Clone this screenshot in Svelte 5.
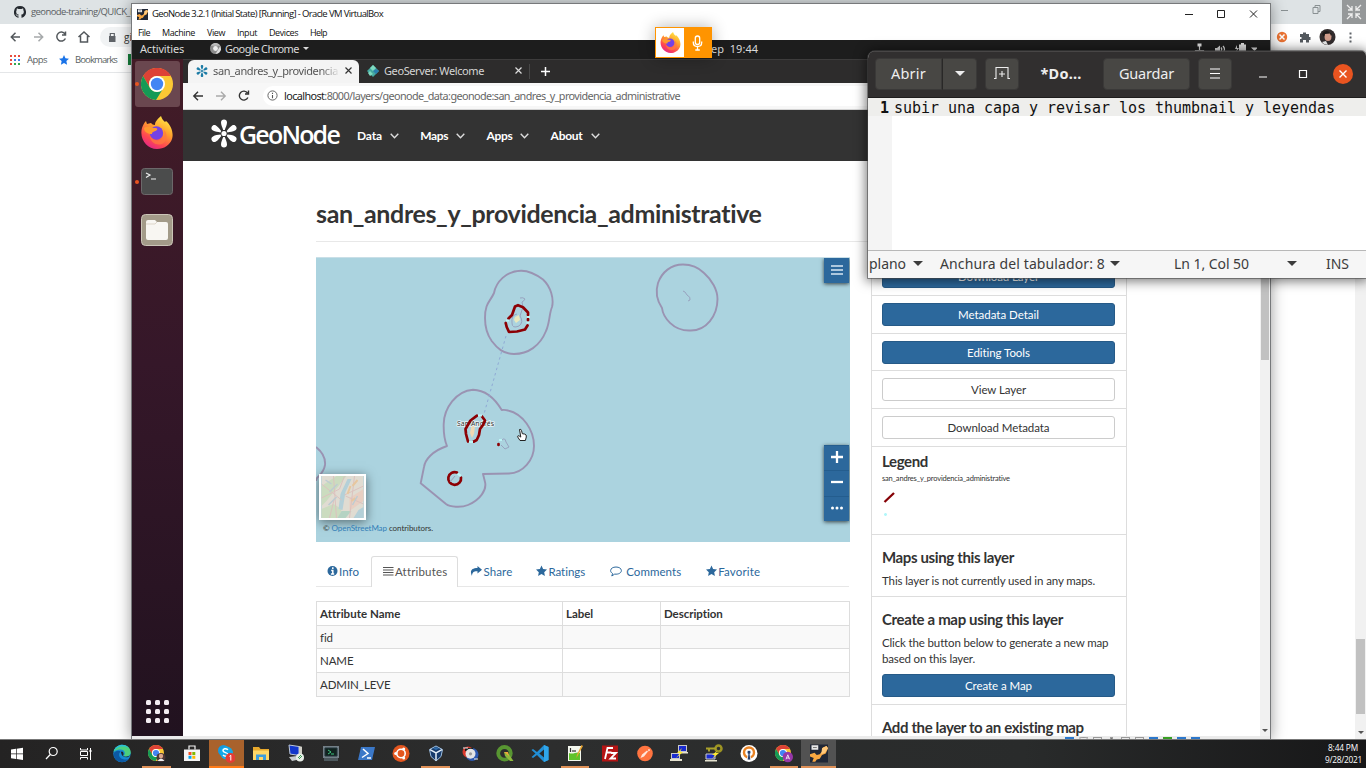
<script>
  // Spreads a line of text over the given width by adjusting its tracking.
  function fit(node, width) {
    const w = node.getBoundingClientRect().width;
    node.style.letterSpacing = (width - w) / node.textContent.length + 'px';
  }

  const menus = [['File', 12], ['Machine', 33], ['View', 18], ['Input', 20], ['Devices', 29], ['Help', 17]];
  const nav = [['Data', 25], ['Maps', 28], ['Apps', 26], ['About', 32]];
  const tabs = [
    ['info', 'Info', 20], ['list', 'Attributes', 52], ['share', 'Share', 29],
    ['star', 'Ratings', 37], ['comment', 'Comments', 55], ['star', 'Favorite', 42]
  ];
  const rows = ['fid', 'NAME', 'ADMIN_LEVE'];
  const actions = [
    ['Download Layer', 81, true], ['Metadata Detail', 81, true], ['Editing Tools', 63, true],
    ['View Layer', 55, false], ['Download Metadata', 102, false]
  ];
  const tasks = ['windows', 'search', 'view', 'edge', 'chromeUser', 'store', 'skype', 'folder', 'remote', 'term',
    'powershell', 'ubuntu', 'vbox', 'disc', 'qgis', 'vscode', 'notepad', 'filezilla', 'postman', 'putty', 'key',
    'openvpn', 'chromeA', 'vm'];
  const running = ['chromeUser', 'vbox', 'notepad', 'chromeA', 'vm'];
</script>

{#snippet chrome()}
  <circle cx="16" cy="16" r="16" fill="#fbc834" />
  <path d="M2.1 8A16 16 0 0 1 29.9 8H16a8 8 0 0 0-7.3 11.5z" fill="#dd4236" />
  <path d="M2.1 8A16 16 0 0 0 15 32l7.3-11.8A8 8 0 0 1 9 20z" fill="#159a56" />
  <circle cx="16" cy="16" r="8" fill="#fff" />
  <circle cx="16" cy="16" r="6.2" fill="#4285f4" />
{/snippet}

{#snippet firefox(id)}
  <defs>
    <linearGradient id={id} x1=".8" y1="0" x2=".25" y2="1">
      <stop offset="0" stop-color="#fff04a" /><stop offset=".4" stop-color="#ffa02c" />
      <stop offset=".75" stop-color="#ff4552" /><stop offset="1" stop-color="#e0248e" />
    </linearGradient>
  </defs>
  <path d="M1 12C2 9 3 7 5 5l1 3 4-1c1 1 2 2 4 2 0-4 3-6 6-9 1 3 2 4 4 6l1-1c5 4 8 12 6 18C29 29 23 33 16 33 6 33-2 23 1 12z" fill="url(#{id})" />
  <circle cx="15.500" cy="17" r="6.700" fill="#7542e5" />
  <path d="M3 12c4-2 7-1 9 0 3 0 5 0 4 2-2 2-5 1-5 4-4 0-8-2-8-6z" fill="#ff9a2e" />
  <path d="M9 20c2 4 8 6 12 3 3-2 3-7 1-10 5 4 5 12-1 15-6 2-12-2-12-8z" fill="#ff7a40" opacity=".75" />
{/snippet}

{#snippet burst()}
  <g fill="currentColor">
    <circle cx="14" cy="14" r="2.600" />
    {#each [0, 60, 120, 180, 240, 300] as a}
      <path transform="rotate({a} 14 14)" d="M13.200 10.400C12.400 8 11 5.500 11 3 11 1 12.200 0 14 0s3 1 3 3c0 2.500-1.400 5-2.200 7.400z" />
    {/each}
  </g>
{/snippet}

{#snippet hostIcon()}
  <rect width="24" height="24" fill="#202736" />
  <path d="M0 13l6-2 3 3 4-1 4-5V4l5-2 2 3-3 7-5 2-3 5-4 1-2 3H3l2-5-5-2z" fill="#f7a742" />
  <path d="M16 5l6-3 2 3-4 6-5 2z" fill="#ffc97c" />
  <rect x="2" y="1" width="9" height="6" fill="#e6e6e6" />
  <path d="M4 4h5" stroke="#555" />
{/snippet}

{#snippet tabIcon(k)}
  {#if k === 'info'}
    <svg width="11" height="12" viewBox="0 0 11 12"><circle cx="5.500" cy="6" r="5" fill="currentColor" /><path d="M5.800 2.300v1.600M4.200 5.400h1.600v3.200M3.900 8.900h3.300" stroke="#fff" stroke-width="1.500" fill="none" /></svg>
  {:else if k === 'list'}
    <svg width="11" height="12" viewBox="0 0 11 12"><path d="M0 2.500h10.500M0 5h10.500M0 7.500h10.500M0 10h10.500" stroke="currentColor" stroke-width="1.200" /></svg>
  {:else if k === 'share'}
    <svg width="12" height="12" viewBox="0 0 12 12"><path d="M7.500 1 12 4.700 7.500 8.500V6.300C4 6.100 2.200 7.200 2 11-.5 6 1.500 3 7.500 3z" fill="currentColor" /></svg>
  {:else if k === 'star'}
    <svg width="11" height="12" viewBox="0 0 11 12"><path d="M5.500.6 7.100 4 11 4.500 8.200 7.200l.7 3.800-3.400-1.900L2.100 11l.7-3.800L0 4.500 3.900 4z" fill="currentColor" /></svg>
  {:else}
    <svg width="12" height="12" viewBox="0 0 12 12"><path d="M6 2C3 2 .6 3.500.6 5.600c0 1.200.8 2.200 2 2.900L1.800 11l2.900-1.900c3.800.5 6.700-1.300 6.700-3.500C11.400 3.500 9 2 6 2z" fill="none" stroke="currentColor" /></svg>
  {/if}
{/snippet}

{#snippet task(k)}
  {#if k === 'windows'}
    <path d="M3 5.500 8 4.800v4.700H3zM8.700 4.700l6.300-.9v5.700H8.700zM3 10.200h5v4.700l-5-.7zM8.700 10.200H15V16l-6.300-1z" fill="#fff" />
  {:else if k === 'search'}
    <g fill="none" stroke="#fff" stroke-width="1.200"><circle cx="10.200" cy="7.500" r="4" /><path d="M7.300 10.500 3 15" /></g>
  {:else if k === 'view'}
    <g fill="none" stroke="#fff" stroke-width="1"><path d="M2.500 4v2h7V4M2.500 15.500v-2h7v2M2.500 7.500h7v4h-7zM12.500 4v12" /><path d="M11.500 7h2" stroke-width="2" /></g>
  {:else if k === 'edge'}
    <circle cx="9" cy="9.500" r="8.700" fill="#168bd2" />
    <path d="M.6 8C2-1 17-1.500 17.700 8c.2 4-4.700 5.500-7.200 4 3-3 .5-6.500-3-6.500C4 5.500 1 7 .6 8z" fill="#4bd07e" />
    <path d="M.5 8C3-1 13-.5 15.500 4 10 1 3 3 .5 8z" fill="#2bbfd5" />
    <path d="M7.800 7.500c-4 3-1 9.500 7.700 7.700-6 6.500-16 1-14.700-6C2 6.500 6 6 7.800 7.500z" fill="#0c59a4" />
    <path d="M8 8.500c0-2 3-1 2.500 2l-.5 1.500c2 1 5 .8 7-.5-2 3-8 2.500-9-3z" fill="#252525" />
  {:else if k === 'chromeUser'}
    <g transform="translate(0 1) scale(.5)">{@render chrome()}</g>
    <circle cx="13" cy="13.500" r="4.500" fill="#4b3636" /><circle cx="13" cy="12" r="2.200" fill="#dba58a" /><path d="M9.500 17q3.500-5 7 0z" fill="#eee" />
  {:else if k === 'store'}
    <path d="M1 5.500h16V17H1z" fill="#f5f5f5" /><path d="M6 5.500V2h6v3.500" fill="none" stroke="#f5f5f5" stroke-width="1.200" />
    <path d="M5.500 8h3v3h-3z" fill="#f25022" /><path d="M9.300 8h3v3h-3z" fill="#7fba00" /><path d="M5.500 11.800h3v3h-3z" fill="#00a4ef" /><path d="M9.300 11.800h3v3h-3z" fill="#ffb900" />
  {:else if k === 'skype'}
    <circle cx="6.500" cy="6.500" r="5.500" fill="#1799dd" /><circle cx="9.500" cy="9" r="6.500" fill="#14a9e8" />
    <path d="M11 5.800C9 4 5.800 4.500 6 6.800c.2 2.200 5 1.500 5 3.800-.2 2-3.500 2-5 .4" stroke="#fff" stroke-width="1.500" fill="none" />
    <circle cx="13.500" cy="14" r="5" fill="#e53c35" /><path d="M12.500 12.300l1.300-1v5.200" stroke="#fff" fill="none" />
  {:else if k === 'folder'}
    <path d="M1 3h6l1.500 2H17v11H1z" fill="#e8a92c" /><path d="M1 6.500h16V16H1z" fill="#ffd767" /><path d="M4 16v-5.500h10V16h-3v-3H7v3z" fill="#3d9ddd" />
  {:else if k === 'remote'}
    <path d="M2 1l10 1.500v9L3 10z" fill="#1236ca" stroke="#bbc6d8" /><path d="M12 2l3 .7v8L12 12z" fill="#d0d0c8" /><path d="M2 13l8-1 4 3-9 2z" fill="#c7ccd0" /><circle cx="13" cy="13.500" r="4" fill="#e8eee8" /><path d="M11 14l3-3M12 15l3-3" stroke="#3a9c52" />
  {:else if k === 'term'}
    <path d="M1 2h16v12H1z" fill="#738088" /><path d="M2 14h14v3H2z" fill="#4c585d" /><path d="M3 4h12v8H3z" fill="#10231f" stroke="#23343a" /><path d="M6 6l3 2-3 2M9 10h3" stroke="#3fc680" fill="none" />
  {:else if k === 'powershell'}
    <path d="M4 3h14l-3 13H1z" fill="#3b78c8" /><path d="M6 5l5 4.500-6 4M10 14h4" stroke="#fff" stroke-width="1.500" fill="none" />
  {:else if k === 'ubuntu'}
    <circle cx="9" cy="9.500" r="8.500" fill="#e4561f" /><circle cx="9" cy="9.500" r="4.200" fill="none" stroke="#fff" stroke-width="1.600" /><circle cx="3.700" cy="9.500" r="1.500" fill="#fff" /><circle cx="11.700" cy="4.900" r="1.500" fill="#fff" /><circle cx="11.700" cy="14.100" r="1.500" fill="#fff" />
  {:else if k === 'vbox'}
    <path d="M9 2l6.500 3.500-1.500 7L9 17l-5-4.500L2.500 5.500z" fill="#153a6b" stroke="#9fc0e2" /><path d="M3 5.700 9 9l6-3.300M9 9v7.500" stroke="#e3eef8" stroke-width="1.500" fill="none" /><path d="M6 4.500 9 3l3 1.500L9 6z" fill="#2d6aa8" />
  {:else if k === 'disc'}
    <circle cx="11" cy="10.500" r="6.500" fill="#2c58b0" /><circle cx="7" cy="8" r="5.500" fill="#d9382c" /><path d="M4 4h8v3H4z" fill="#191919" /><circle cx="9.500" cy="9.800" r="5" fill="#e4e4e4" /><circle cx="9.500" cy="9.800" r="1.600" fill="#999" /><path d="M2 4h5M13 15h4" stroke="#eee" />
  {:else if k === 'qgis'}
    <circle cx="8.500" cy="9.300" r="6.300" fill="none" stroke="#589632" stroke-width="3.800" /><path d="M8 8l3 .3 1.500 1.500L17.500 17H14l-5-5z" fill="#8eba3c" /><path d="M8 8h4l1 4z" fill="#eea83b" />
  {:else if k === 'vscode'}
    <path d="M13 1l4.500 2v13L13 18 6 11l-4 3-1.500-1 4-3.500-4-3.500L2 5l4 3z" fill="#218fd6" /><path d="M13 5.500v8L8.300 9.500z" fill="#292a2b" /><path d="M13 1l4.500 2v13L13 18z" fill="#2fa6ea" />
  {:else if k === 'notepad'}
    <path d="M2 2h13v15H2z" fill="#f3f7ee" /><path d="M3 9c4 2 8-2 11 0v7H3z" fill="#5fc32b" /><path d="M4.500 4v4M7 6v2M9 6v2" stroke="#333" stroke-width="1.200" /><path d="M17 2 11.500 12l-1 2 .3-3L15.500 1z" fill="#e8a532" />
  {:else if k === 'filezilla'}
    <path d="M1 1.500h16v16H1z" fill="#b51414" /><path d="M4 15 6.500 4H12M5.500 8.500h5M10 9h5l-5.500 5.500H15" stroke="#fff" stroke-width="1.800" fill="none" />
  {:else if k === 'postman'}
    <circle cx="9" cy="9.500" r="7.800" fill="#ff7440" /><path d="M4.500 14 6 10.500l5-4 1 1-4 5zM12 5.500l1.500-.5.5 1.500-1.500 1z" fill="#ffe6db" />
  {:else if k === 'putty'}
    <path d="M8 1h9v7H8zM1 9h9v6H1z" fill="#c8c8c8" /><path d="M9 2h7v5H9zM2 10h7v4H2z" fill="#192bd0" /><path d="M0 15h12v2H0zM8 8h10v1.500H8z" fill="#e5e2cf" /><path d="M12 4 7 9h3l-4 5 7-6h-3z" fill="#ffea31" />
  {:else if k === 'key'}
    <circle cx="13.500" cy="4.500" r="3" fill="none" stroke="#9d9423" stroke-width="2.500" /><path d="M11 3.500H1v2h2v2h2v-2h6z" fill="#aaa12b" /><path d="M1 10h9v5H1z" fill="#192bd0" stroke="#ccc" /><path d="M0 16h12v1.500H0z" fill="#e5e2cf" /><path d="M12 7 7 11h3l-3 4 7-6h-3z" fill="#ffea31" />
  {:else if k === 'openvpn'}
    <circle cx="9" cy="9.500" r="8.500" fill="#fff" /><circle cx="9" cy="8.500" r="5" fill="none" stroke="#e88324" stroke-width="2.400" /><path d="M9 6.200a2 2 0 0 0-1 3.700L7.200 16h3.600L10 9.900a2 2 0 0 0-1-3.700z" fill="#233d6b" stroke="#fff" stroke-width=".8" />
  {:else if k === 'chromeA'}
    <g transform="translate(0 1) scale(.5)">{@render chrome()}</g><circle cx="12.800" cy="13" r="5.200" fill="#9637a8" /><path d="M11 15.300l1.800-4.500 1.800 4.500M11.500 14h2.500" fill="none" stroke="#fff" stroke-width=".8" />
  {:else}
    <g transform="translate(0 .5) scale(.75)">{@render hostIcon()}</g>
  {/if}
{/snippet}

<div class="desktop">
  <!-- Host browser behind the virtual machine -->
  <div class="host">
    <div class="host-tabs">
      <svg width="12" height="12" viewBox="0 0 16 16"><path fill="#24292f" d="M8 0a8 8 0 0 0-2.530 15.590c.4.070.55-.17.55-.38v-1.500c-2.230.48-2.700-.95-2.700-.95-.36-.92-.89-1.170-.89-1.170-.73-.5.050-.49.050-.49.800.06 1.230.83 1.230.83.710 1.220 1.870.87 2.330.66.070-.52.280-.87.500-1.070-1.770-.2-3.640-.89-3.640-3.950 0-.87.310-1.590.82-2.150-.08-.2-.36-1.020.08-2.120 0 0 .67-.21 2.200.82a7.600 7.600 0 0 1 4 0c1.530-1.040 2.200-.82 2.200-.82.440 1.100.160 1.920.080 2.120.510.560.820 1.270.820 2.150 0 3.070-1.870 3.750-3.650 3.950.290.250.540.730.540 1.480v2.200c0 .21.150.46.550.38A8 8 0 0 0 8 0z" /></svg>
      <span class="host-title"><span use:fit={101}>geonode-training/QUICK_I</span></span>
      <div class="grow"></div>
      <svg class="host-ctl" width="90" height="24" viewBox="0 0 90 24" fill="none" stroke="#899092"><path d="M5 10.500h7M37 7.500h5v6h-5zM39 7.500v-2h5v6h-2" /></svg>
    </div>
    <div class="host-bar">
      <svg width="100" height="26" viewBox="0 0 100 26" fill="none" stroke="#53585c" stroke-width="1.500"><path d="M20 13H11.500M15.500 8.800 11.300 13l4.200 4.200" /><path d="M34 13h8.500M38.500 8.800 42.700 13l-4.200 4.200" stroke="#a6a9ab" /><path d="M65 10a4.500 4.500 0 1 0 .4 4.500M65.500 7.500V11H62" /><path d="M78.500 13 84 8l5.500 5M80.500 12v6h7v-6" /></svg>
      <div class="host-url"><svg width="8" height="10" viewBox="0 0 8 10"><path d="M1 4h6.500v6H1z" fill="#5f6368" /><path d="M2.300 4V1.500h4V4" fill="none" stroke="#5f6368" stroke-width="1.200" /></svg><span use:fit={8}>gi</span></div>
      <div class="grow"></div>
      <svg width="90" height="26" viewBox="0 0 90 26"><circle cx="6" cy="13" r="5.200" fill="#ec7434" /><path d="M3.500 10.500l5 5M8.500 10.500l-5 5" stroke="#fff" stroke-width="1.500" /><path d="M24 10h3V8.500h3V10h3v3h1.500v3H33v2.500h-3V16h-3v2.500h-3V15h1.500v-2H24z" fill="#54595e" /><circle cx="51.500" cy="13" r="8" fill="#322c2d" /><ellipse cx="52" cy="12.500" rx="3.500" ry="4.500" fill="#cf9b8a" /><path d="M46 10q4-6 10 0l-1 2-1-2.500-5 .5-1 3z" fill="#1b1818" /><path d="M46 18l4-1 2 4-4-1z" fill="#eee" /><path d="M74.500 8.500v2M74.500 12.500v2M74.500 16.500v2" stroke="#5f6368" stroke-width="2" /></svg>
    </div>
    <div class="host-marks">
      <svg width="10" height="10" viewBox="0 0 10 10"><path d="M0 1h2" stroke="#e94b3c" stroke-width="2" /><path d="M4 1h2M8 1h2M0 5h2M0 9h2" stroke="#e94b3c" stroke-width="2" /><path d="M4 5h2M8 5h2" stroke="#3d7de9" stroke-width="2" /><path d="M4 9h2M8 9h2" stroke="#32a852" stroke-width="2" /></svg>
      <span class="host-mark apps" use:fit={20}>Apps</span>
      <svg width="10" height="10" viewBox="0 0 11 11"><path d="M5.500 0 7.100 3.600 11 4 8.100 6.700l.8 4.100-3.400-2.100-3.400 2.100.8-4.100L0 4l3.900-.4z" fill="#1a73e8" /></svg>
      <span class="host-mark" use:fit={42}>Bookmarks</span>
      <i class="green"></i>
    </div>
    <div class="host-page"><div class="host-scroll"><div class="host-thumb"></div><b class="caret"></b></div></div>
  </div>
  <svg class="shrink" viewBox="0 0 24 24" width="24" height="24"><path d="M0 0h24v24H0z" fill="#959899" /><path d="M5 5l5 5V6M10 10H6M19 5l-5 5V6M14 10h4M5 19l5-5v4M10 14H6M19 19l-5-5v4M14 14h4" stroke="#eee" stroke-width="1.300" fill="none" /></svg>

  <!-- Virtual machine window -->
  <section class="vm">
    <header class="vm-title">
      <svg width="11" height="11" viewBox="0 0 24 24">{@render hostIcon()}</svg>
      <span class="vm-name" use:fit={231}>GeoNode 3.2.1 (Initial State) [Running] - Oracle VM VirtualBox</span>
      <div class="grow"></div>
      <svg width="76" height="20" viewBox="0 0 76 20" fill="none" stroke="#222"><path d="M1 10.500h8M33.500 6.500h7v7h-7zM66 6.500l7 7M73 6.500l-7 7" /></svg>
    </header>
    <div class="vm-menu">{#each menus as [m, w]}<span use:fit={w}>{m}</span>{/each}</div>

    <div class="topbar">
      <span class="act" use:fit={44}>Activities</span>
      <svg class="app-icon" width="11" height="11" viewBox="0 0 32 32"><circle cx="16" cy="16" r="16" fill="#8b8b8b" /><path d="M2 8A16 16 0 0 1 30 8H16z" fill="#bbb" /><circle cx="16" cy="16" r="7" fill="#eee" /><path d="M16 32 30 9l2 10q-4 12-16 13z" fill="#ddd" /></svg>
      <span class="app" use:fit={74}>Google Chrome</span><b class="caret"></b>
      <div class="grow"></div>
      <span class="clock" use:fit={53}>Sep&nbsp; 19:44</span>
      <svg class="tray" width="64" height="14" viewBox="0 0 64 14"><g fill="none" stroke="#ddd" stroke-width="1.200"><path d="M6.500 3v5M2.500 11V8.500h8V11" /><path d="M28 5.500q1.500 1.500 0 4M30 4q3 3 0 7" /></g><path d="M4.500 1.500h4v3h-4zM1 10h3v2H1zM9 10h3v2H9zM22 6h2l3-2.500V11l-3-2h-2zM46 2.500h2V1h3v1.500h2v10h-7zM44 3l-2 4h2l-1 3 3-4h-2zM58 5.500h7L61.500 9z" fill="#ddd" /></svg>
    </div>

    <div class="guest">
      <aside class="dock">
        <div class="dock-item on"><i></i><svg width="32" height="32" viewBox="0 0 32 32">{@render chrome()}</svg></div>
        <div class="dock-item"><svg width="32" height="33" viewBox="0 0 32 33">{@render firefox('foxDock')}</svg></div>
        <div class="dock-item"><i></i><svg width="32" height="27" viewBox="0 0 32 27"><rect x=".5" y=".5" width="31" height="26" rx="3" fill="#4b4c4c" stroke="#6c686a" /><path d="M5 5l4 2-4 2.500M10 11h5" stroke="#eee" stroke-width="1.200" fill="none" /></svg></div>
        <div class="dock-item"><svg width="32" height="32" viewBox="0 0 32 32"><rect x=".5" y=".5" width="31" height="31" rx="4" fill="#a39b89" stroke="#cbc5b8" /><path d="M5 8q0-2 2-2h7l2 2h9q2 0 2 2v14q0 2-2 2H7q-2 0-2-2z" fill="#f8f6f2" /><path d="M5 10h9l2-2" stroke="#ddd5c9" fill="none" /></svg></div>
        <div class="grow"></div>
        <div class="dots">{#each Array(9) as _}<i></i>{/each}</div>
      </aside>

      <div class="browser">
        <div class="strip">
          <div class="tab active"><svg width="12" height="12" viewBox="0 0 28 28" color="#1c7ba5">{@render burst()}</svg><span class="tab-name"><span use:fit={125}>san_andres_y_providencia</span></span><svg class="x" width="7" height="7" viewBox="0 0 7 7"><path d="M.5.5l6 6M6.500.5l-6 6" stroke="#333" stroke-width="1.200" /></svg></div>
          <div class="tab second"><svg width="12" height="12" viewBox="0 0 12 12"><path d="M6 0l6 6-6 6-6-6z" fill="#45a9a0" /><path d="M6 0l3 3-3 3-3-3zM3 6l3 3-3 2-2-3z" fill="#7edac0" /><path d="M6 6l3-2 3 2-3 3z" fill="#2b7faf" /></svg><span use:fit={100}>GeoServer: Welcome</span><svg class="x" width="7" height="7" viewBox="0 0 7 7"><path d="M.5.5l6 6M6.500.5l-6 6" stroke="#ddd" stroke-width="1.200" /></svg></div>
          <svg class="plus" width="9" height="9" viewBox="0 0 9 9"><path d="M4.500 0v9M0 4.500h9" stroke="#fff" stroke-width="1.500" /></svg>
        </div>
        <div class="tools">
          <svg width="76" height="26" viewBox="0 0 76 26" fill="none" stroke="#333" stroke-width="1.400"><path d="M20 13h-9M15 8.800 10.800 13l4.200 4.200" /><path d="M33 13h9M38 8.800l4.200 4.200-4.200 4.200" stroke="#aaa" /><path d="M64.500 10a4.500 4.500 0 1 0 .4 4.500M65.500 7.500V11H62" /></svg>
          <div class="url"><svg width="11" height="11" viewBox="0 0 11 11"><circle cx="5.500" cy="5.500" r="4.600" fill="none" stroke="#666" /><path d="M5.500 5v3.300M5.500 2.700v1.200" stroke="#555" stroke-width="1.100" /></svg><span use:fit={396}><b>localhost</b>:8000/layers/geonode_data:geonode:san_andres_y_providencia_administrative</span></div>
        </div>
        <nav>
          <svg class="logo" width="28" height="29" viewBox="0 0 28 28" color="#fff">{@render burst()}</svg>
          <span class="brand" use:fit={100}>GeoNode</span>
          {#each nav as [n, w]}<span class="nav-item"><span use:fit={w}>{n}</span><svg width="9" height="6" viewBox="0 0 9 6"><path d="M.7.8l3.800 4 3.800-4" fill="none" stroke="#ddd" stroke-width="1.400" /></svg></span>{/each}
        </nav>

        <div class="view">
          <main>
            <h2><span use:fit={446}>san_andres_y_providencia_administrative</span></h2>
            <div class="cols">
              <div class="left">
                <div class="map">
                  <svg width="534" height="285" viewBox="316 257 534 285">
                    <g fill="none" stroke="#9a93b2" stroke-width="1.900" stroke-linejoin="round">
                      <path d="M521 270.700C530 270.500 537 275 543 279.500C551 287 554 299 552 307C549 314 550 322 546 331C540 346 528 354 514 354C503 354 497 348 491.700 341C486 333 485 326 485 318C485 303 490 302 494 293C496 282 506 271 521 270.700Z" />
                      <path d="M501.700 410C494 397 485 390 473 389.700C456 391 444 408 443.700 424C443.500 432 444 439 447 446C432 451 425 460 424 467L420.700 483.300L446 504C450 507 461 508 468 505C480 500 487 490 485 482L483 474L509 473.500C523 473 534 460 534 446C534 430 523 414 508 410.500Q505 409.500 501.700 410Z" />
                      <path d="M683 264.500C693 264.500 699 268 704 273C712 280 717.500 290 717.500 299C717.500 316 706 331 690 330.500C673 331 663 317 662 308C656 299 655.500 291 658 283C662 272 671 264.500 683 264.500Z" />
                      <path d="M316 447Q326 455 325 465Q324 471 319 476Q316 478 316 481" />
                    </g>
                    <path d="M506 336 484 414" stroke="#8fa9d5" stroke-dasharray="2.500 3" fill="none" />
                    <g fill="none" stroke="#98a3bf"><path d="M520 298q3-1 5 1-1 2-3 3l1 5-3 9q4 6-1 10-7 3-7-3-1-8 5-9M683 291q2 0 4 4 4 2 3 5l-2 1M502 440q3-3 4 2l3 5-4 2-4-4" /></g>
                    <path d="M515 317l4-2 1 5-4 3-2-3z" fill="#e9e9be" />
                    <path d="M472 423l3 3-1 8-2 4-2-5z" fill="#f0d8b4" />
                    <text x="457" y="425.500" textLength="37" class="place">San Andrés</text>
                    <g fill="none" stroke="#8c0004" stroke-width="2.700" stroke-linejoin="round" stroke-linecap="round">
                      <path d="M508.500 318.500 512 315 515 306.500 518 305.200 523 307.200 528 312.500V315M528 319v1.300M527.500 325.500 525 329.500 517 331.500 509 332 506.700 327 505.700 323" />
                      <path d="M477 415.700 470.500 420.500 465.500 429 466 434 468 441.500M482 416.500 485 420.500 483 425 480 429 479 435 476.700 440 473.500 441.700M498.500 444v1" />
                      <path d="M457 472.500A6.400 6.400 0 1 0 461 477.500" />
                    </g>
                    <path d="M506 320.500h3M527 317h3M526.500 322.500h3M478 415.500h4M469 442h4M499 440h3M457.500 473.500l3.500 2.500" stroke="#bcf5f5" stroke-width="2.200" />
                    <path d="M450 482l5-6" stroke="#9aa0ba" />
                    <path d="M519.500 429.500q1.500-.8 2 1l.8 3.200 2.500.4q2 .6 1.500 2.900l-.9 3.500H520l-2.500-3.800q0-1.800 2.300-.4l1 .8z" fill="#fff" stroke="#222" />
                  </svg>
                  <div class="map-menu"><svg width="14" height="12" viewBox="0 0 14 12"><path d="M1 2h12M1 6h12M1 10h12" stroke="#d8e6f2" stroke-width="1.500" /></svg></div>
                  <div class="zoom">
                    <span><svg width="12" height="12" viewBox="0 0 12 12"><path d="M6 0v12M0 6h12" stroke="#fff" stroke-width="2.300" /></svg></span>
                    <span><svg width="12" height="12" viewBox="0 0 12 12"><path d="M0 6h12" stroke="#fff" stroke-width="2.300" /></svg></span>
                    <span><svg width="12" height="12" viewBox="0 0 12 12" fill="#fff"><circle cx="1.500" cy="6" r="1.500" /><circle cx="6" cy="6" r="1.500" /><circle cx="10.500" cy="6" r="1.500" /></svg></span>
                  </div>
                  <div class="base"><svg width="43" height="42" viewBox="0 0 42 42"><path d="M0 0h42v42H0z" fill="#e0dcd2" /><path d="M0 10 15 0h10L5 25l-5 5zM0 33l12-5 8 5-2 9H0z" fill="#cbdcbf" /><path d="M26 3l4 0-6 13-3 18-4-1 2-15zM32 42l5-8 5-3v11z" fill="#b4d0d8" /><path d="M20 35h10l-6 7h-8z" fill="#b5d3c3" /><path d="M28 22l14-9v12l-14 10z" fill="#e8cfc2" /><path d="M0 22l18-9 5-13M0 8l20 16M12 0l3 42M28 42l5-42M24 20l18 8M42 10 23 19M8 42l5-20" stroke="#dcc2be" fill="none" /><path d="M26 18l3-8M36 4l-5 6M30 25l4-3" stroke="#e7c79f" stroke-width="2" /><path d="M4 4l6 4M16 8l-8 8M7 29l8-8M31 29l5-9" stroke="#bdccd2" stroke-width="1.500" /></svg></div>
                  <div class="credit"><span use:fit={110}>© <em>OpenStreetMap</em> contributors.</span></div>
                </div>
                <div class="tabs">{#each tabs as [k, t, w], i}<span class:current={i === 1} class:wide={k === 'comment'}>{@render tabIcon(k)}<span use:fit={w}>{t}</span></span>{/each}</div>
                <table>
                  <thead><tr><th><span use:fit={80}>Attribute Name</span></th><th class="lab"><span use:fit={27}>Label</span></th><th class="desc"><span use:fit={59}>Description</span></th></tr></thead>
                  <tbody>{#each rows as r}<tr><td>{r}</td><td></td><td></td></tr>{/each}</tbody>
                </table>
              </div>
              <div class="side">
                {#each actions as [t, w, solid]}<div class="row"><button class:solid><span use:fit={w}>{t}</span></button></div>{/each}
                <div class="legend">
                  <h4><span use:fit={46}>Legend</span></h4>
                  <p class="tiny"><span use:fit={128}>san_andres_y_providencia_administrative</span></p>
                  <svg width="16" height="30" viewBox="0 0 16 30"><path d="M2.500 13 12 4" stroke="#850005" stroke-width="2.300" /><path d="M2 25.500h3M3.500 24v3" stroke="#b2f7fa" stroke-width="1.600" /></svg>
                </div>
                <div class="uses"><h4><span use:fit={132}>Maps using this layer</span></h4><p><span use:fit={213}>This layer is not currently used in any maps.</span></p></div>
                <div class="create"><h4><span use:fit={181}>Create a map using this layer</span></h4><p><span use:fit={226}>Click the button below to generate a new map</span><br /><span use:fit={93}>based on this layer.</span></p><button class="solid"><span use:fit={67}>Create a Map</span></button></div>
                <div class="add"><h4><span use:fit={202}>Add the layer to an existing map</span></h4></div>
              </div>
            </div>
          </main>
          <div class="scroll"><div></div><b class="caret"></b></div>
        </div>
      </div>
    </div>
    <div class="vm-status"><i class="blue"></i><i class="disk"></i><i></i><i class="peak"></i><i></i><i></i><i class="blue"></i><i class="lime"></i><i class="blue"></i><i class="blue"></i></div>
  </section>

  <!-- Sharing indicator -->
  <div class="share"><span><svg width="21" height="21" viewBox="0 0 32 33">{@render firefox('foxShare')}</svg></span><svg width="27" height="29" viewBox="0 0 27 29" fill="none" stroke="#fff" stroke-width="1.300"><rect x="11.300" y="8" width="4.400" height="8.500" rx="2.200" /><path d="M9.300 13.500v1q0 4 4.200 4t4.200-4v-1M13.500 18.500v3.500M11.300 22h4.500" /></svg></div>

  <!-- Text editor -->
  <section class="editor">
    <header>
      <div class="pair"><span class="gbtn open"><span use:fit={35}>Abrir</span></span><span class="gbtn drop"><b class="caret"></b></span></div>
      <span class="gbtn new"><svg width="16" height="14" viewBox="0 0 16 14" fill="none" stroke="#eee" stroke-width="1.100"><path d="M0 12.500h2v-11h12v11h2M8 5v6M5 8h6" /></svg></span>
      <strong><span use:fit={41}>*Do...</span></strong>
      <span class="gbtn save"><span use:fit={55}>Guardar</span></span>
      <span class="gbtn burger"><svg width="10" height="11" viewBox="0 0 10 11"><path d="M0 1h10M0 5.500h10M0 10h10" stroke="#fff" stroke-width="1.100" /></svg></span>
      <svg class="wm" width="96" height="20" viewBox="0 0 96 20"><path d="M2 13h8M42.500 6.500h7v7h-7z" fill="none" stroke="#fff" stroke-width="1.200" /><circle cx="86" cy="10" r="10" fill="#e95420" /><path d="M82.500 6.500l7 7M89.500 6.500l-7 7" stroke="#fff" stroke-width="1.400" /></svg>
    </header>
    <div class="text"><div class="gutter"></div><div class="line"><b>1</b><span use:fit={441}>subir una capa y revisar los thumbnail y leyendas</span></div></div>
    <footer><span use:fit={37}>plano</span><b class="caret"></b><span class="tabw" use:fit={165}>Anchura del tabulador: 8</span><b class="caret"></b><span class="ln" use:fit={75}>Ln 1, Col 50</span><b class="caret far"></b><span class="ins" use:fit={23}>INS</span></footer>
  </section>

  <div class="taskbar">
    <div class="tasks">{#each tasks as t}<span class:run={running.includes(t)} class:alert={t === 'skype'} class:focus={t === 'vm'}><svg width="18" height="19" viewBox="0 0 18 19">{@render task(t)}</svg></span>{/each}</div>
    <div class="time"><span use:fit={30}>8:44 PM</span><span use:fit={37}>9/28/2021</span></div>
  </div>
</div>

<style>
  :global(body) { margin: 0; overflow: hidden; }
  * { box-sizing: border-box; }
  svg { display: block; flex: none; }
  span { white-space: nowrap; }
  .desktop { position: relative; width: 1366px; height: 768px; overflow: hidden; background: #fff; font-family: "Noto Sans", sans-serif; }
  .grow { flex: 1; }
  .caret { display: block; width: 0; height: 0; border: 4px solid transparent; border-top: 4px solid currentColor; border-bottom: 0; }

  .host { height: 740px; display: flex; flex-direction: column; font-family: "Open Sans", sans-serif; color: #5a5f63; }
  .host-tabs { height: 24px; background: #dee3e5; display: flex; align-items: center; padding-left: 14px; }
  .host-title { font-size: 9.500px; margin-left: 5px; width: 101px; padding-bottom: 2px; }
  .host-bar { height: 26px; display: flex; align-items: center; }
  .host-url { background: #f1f3f4; height: 20px; width: 60px; border-radius: 10px 0 0 10px; display: flex; align-items: center; gap: 8px; padding-left: 8px; font-size: 10px; color: #333; }
  .host-marks { height: 23px; border-bottom: 1px solid #e4e6e8; display: flex; align-items: center; padding: 0 0 3px 10px; font-size: 9.500px; }
  .host-mark { margin-left: 6px; }
  .apps { margin-right: 12px; margin-left: 7px; }
  .green { width: 6px; height: 11px; background: #16803b; margin-left: 11px; }
  .host-page { flex: 1; display: flex; justify-content: flex-end; }
  .host-scroll { width: 11px; background: #f1f1f1; display: flex; flex-direction: column; justify-content: flex-end; align-items: center; color: #555; padding-bottom: 6px; }
  .host-thumb { width: 9px; height: 75px; background: #c1c1c1; margin-bottom: 17px; }
  .shrink { position: absolute; left: 1342px; top: 0; }

  .vm { position: absolute; left: 131px; top: 3px; width: 1140px; height: 737px; border: 1px solid #77797b; border-bottom: 0; background: #fff; box-shadow: 0 0 14px rgba(0,0,0,.4); display: flex; flex-direction: column; }
  .vm-title { height: 20px; display: flex; align-items: center; gap: 4px; padding: 0 10px 0 5px; font: 9.500px "Open Sans", sans-serif; color: #111; }
  .vm-name { padding-bottom: 1px; }
  .vm-menu { height: 16px; display: flex; gap: 12px; padding: 0 0 0 6px; font: 9px/17px "Open Sans", sans-serif; color: #111; }
  .topbar { height: 19px; background: #1d1d1d; color: #dadada; display: flex; align-items: center; font-size: 11px; padding: 0 13px 2px 8px; }
  .app-icon { margin-left: 26px; }
  .app { margin: 0 4px; }
  .topbar .caret { border-width: 3.500px; border-bottom: 0; }
  .clock { margin-right: 435px; }
  .guest { flex: 1; display: flex; min-height: 0; }
  .dock { width: 51px; background: linear-gradient(#431c27, #351729 45%, #21121f); display: flex; flex-direction: column; align-items: center; padding: 2px 1px 13px 0; gap: 3.300px; }
  .dock-item { width: 45px; height: 45.500px; border-radius: 3px; display: flex; align-items: center; justify-content: center; position: relative; }
  .dock-item.on { background: #6a474f; }
  .dock-item i { position: absolute; left: 0; top: 21px; width: 4px; height: 4px; border-radius: 50%; background: #e95420; }
  .dots { display: grid; grid-template-columns: repeat(3, 5px); gap: 4px; }
  .dots i { height: 5px; border-radius: 1.500px; background: #f4eef2; }

  .browser { flex: 1; display: flex; flex-direction: column; min-width: 0; }
  .strip { height: 24px; background: #2d2c2c; border-top: 1px solid #3d3c3c; display: flex; align-items: center; padding-left: 5px; font-size: 11px; color: #d5d5d5; }
  .tab { display: flex; align-items: center; height: 24px; padding: 0 7px 2px 8px; gap: 5px; line-height: 20px; }
  .tab.active { width: 171px; background: #f4f4f4; color: #555; border-radius: 6px 6px 0 0; }
  .tab-name { width: 127px; -webkit-mask-image: linear-gradient(90deg, #000 85%, transparent); mask-image: linear-gradient(90deg, #000 85%, transparent); }
  .x { margin-left: auto; }
  .plus { margin-left: 11px; }
  .second { border-right: 1px solid #484848; width: 171px; height: 15px; }
  .tools { height: 27px; background: #f7f7f7; display: flex; align-items: center; border-bottom: 1px solid #d4d4d4; padding-bottom: 1px; }
  .url { flex: 1; margin-left: 4px; height: 20px; border-radius: 10px; background: #fff; display: flex; align-items: center; gap: 6px; padding-left: 4px; font-size: 10.800px; color: #666; }
  .url b { font-weight: 400; color: #222; }
  nav { height: 51px; background: #333; display: flex; align-items: center; padding-left: 27px; color: #fff; font: 700 12px Lato, sans-serif; }
  .brand { font: 600 25px/30px "Open Sans", sans-serif; margin: -4px 18px 0 1px; }
  .logo { margin-top: -4px; }
  .nav-item { display: flex; align-items: center; gap: 8px; margin-right: 21.200px; }

  .view { flex: 1; display: flex; min-height: 0; overflow: hidden; font-family: Lato, sans-serif; font-size: 11.500px; color: #333; }
  main { flex: 1; padding: 36px 0 0 133px; }
  h2 { margin: 0; width: 811px; height: 45px; border-bottom: 1px solid #e8e8e8; font-size: 25px; line-height: 33px; font-weight: 700; }
  h2 span { display: inline-block; }
  .cols { display: flex; gap: 22px; padding-top: 15px; }
  .left { width: 533px; }
  .map { position: relative; height: 285px; width: 533.500px; background: #abd3df; border-top: 1px solid #c9dfe7; overflow: hidden; }
  .map > svg { margin-top: -1px; }
  .place { font: 7px "Noto Sans", sans-serif; fill: #333; stroke: #e9f4f7; stroke-width: 1.500px; paint-order: stroke; }
  .map-menu, .zoom { position: absolute; left: 508px; width: 25px; background: #2c689c; box-shadow: 0 1px 4px rgba(0,0,0,.7); color: #fff; }
  .map-menu { top: 0; height: 25px; display: grid; place-items: center; padding-bottom: 1px; }
  .zoom { top: 187px; height: 76px; display: grid; }
  .zoom span { display: grid; place-items: center; border-top: 1px solid #245d8e; padding-bottom: 2px; }
  .base { position: absolute; left: 3px; top: 216px; border: 2px solid #fff; box-shadow: 0 2px 10px rgba(0,0,0,.5); }
  .credit { position: absolute; left: 7px; top: 264px; font-size: 8px; line-height: 12px; }
  .credit em { font-style: normal; color: #327eb7; }
  .tabs { display: flex; height: 31px; margin-top: 14px; border-bottom: 1px solid #e7e7e7; color: #2c689c; }
  .tabs > span { display: flex; align-items: center; gap: 1px; padding: 0 11px 2px; height: 31px; border: 1px solid transparent; border-bottom: 0; }
  .tabs > span:first-child { padding-left: 10px; }
  .tabs > .current { color: #555; background: #fff; border-color: #ddd; border-radius: 3px 3px 0 0; padding-right: 10px; }
  .tabs > .wide { gap: 4px; padding-left: 12px; padding-right: 12px; }
  table { width: 534px; margin-top: 14px; border-collapse: collapse; table-layout: fixed; }
  th, td { border: 1px solid #ddd; text-align: left; padding: 0 3px; height: 23.700px; line-height: 15px; }
  td { letter-spacing: -.1px; }
  .lab { width: 98px; } .desc { width: 189px; }
  tbody tr:nth-child(odd) { background: #f9f9f9; }

  .side { width: 256px; border: 1px solid #ddd; border-bottom: 0; height: 540px; font-size: 11.500px; }
  .side > div { border-bottom: 1px solid #ddd; padding: 0 10px; }
  .side > .row { height: 37.800px; padding-top: 7px; }
  .side > .legend { height: 88px; padding-top: 5px; }
  .side > .uses { height: 62px; padding-top: 13px; }
  .side > .create { height: 108px; padding-top: 13px; }
  .side > .add { padding-top: 13px; }
  button { display: block; width: 233px; height: 23px; border: 1px solid #ccc; border-radius: 3px; background: #fff; color: #333; font: 11.500px Lato, sans-serif; padding: 0; }
  button.solid { background: #2c689c; border-color: #265a87; color: #fff; }
  h4 { margin: 0; font-size: 15px; line-height: 19px; }
  p { margin: 6px 0 0; line-height: 16px; }
  p.tiny { margin: 3px 0 6px; font-size: 7.500px; line-height: 10px; }
  .tiny + svg { margin-top: -1px; }
  .create button { margin-top: 7px; }
  .scroll { width: 10px; background: #f1f1f1; display: flex; flex-direction: column; justify-content: space-between; align-items: center; color: #555; padding-bottom: 4px; }
  .scroll div { width: 8px; height: 199px; background: #c1c1c1; }
  .scroll .caret, .host-scroll .caret { border-width: 3px; border-bottom: 0; }
  .vm-status { height: 4px; background: #ebebeb; border-bottom: 1px solid #888; display: flex; justify-content: flex-end; gap: 5px; padding: 1px 70px 0 0; }
  .vm-status i { width: 9px; height: 2px; border: 1px solid #999; border-bottom: 0; }
  .vm-status .blue { background: #2c78cc; border: 0; } .vm-status .lime { background: #38a022; border: 0; }
  .vm-status .peak { width: 3px; background: #777; margin: 0 3px; } .vm-status .disk { border-radius: 50%; }

  .share { position: absolute; left: 655px; top: 27px; width: 57px; height: 31px; background: #ff9400; border: 1px solid #ff9400; display: flex; box-shadow: 0 0 16px rgba(0,0,0,.3); }
  .share span { width: 29px; background: #fff; display: grid; place-items: center; }

  .editor { position: absolute; left: 868px; top: 51px; width: 498px; height: 227px; border-radius: 7px 5px 0 0; background: #fff; box-shadow: 0 1px 12px 2px rgba(0,0,0,.55); display: flex; flex-direction: column; overflow: hidden; outline: 1px solid rgba(70,70,70,.55); }
  .editor header { height: 47px; background: #312f2f; border-top: 1px solid #484646; border-bottom: 1px solid #1e1d1d; display: flex; align-items: center; padding: 0 0 1px 7px; color: #eee; font-size: 14.500px; line-height: 18px; }
  .gbtn { height: 32px; background: #484744; border: 1px solid #3a3938; border-radius: 4px; display: flex; align-items: center; justify-content: center; padding-bottom: 2px; }
  .pair { display: flex; }
  .open { width: 67px; border-radius: 4px 0 0 4px; } .drop { width: 35px; border-radius: 0 4px 4px 0; border-left-color: #292827; }
  .caret { border-width: 5px; border-bottom: 0; }
  .new { width: 34px; margin-left: 8px; } .save { width: 87px; } .burger { width: 34px; margin-left: 8px; }
  header strong { width: 84px; text-align: center; padding-bottom: 2px; }
  .wm { margin-left: 25px; }
  .text { flex: 1; position: relative; display: flex; }
  .gutter { width: 24px; background: #f4f4f4; }
  .line { position: absolute; left: 0; right: 0; top: 0; height: 18px; background: #eeeeec; display: flex; gap: 5px; padding-left: 12px; font: 15px/20px "DejaVu Sans Mono", monospace; color: #111; }
  .editor footer { height: 28px; border-top: 1px solid #b8b8b8; background: #f6f6f6; display: flex; align-items: center; font-size: 14px; color: #3c3c3c; padding: 0 0 2px 1px; }
  footer .caret { margin-left: 7px; }
  .tabw { margin-left: 17px; } .tabw + .caret { margin-left: 5px; }
  .ln { margin-left: 54px; } footer .far { margin-left: 38px; } .ins { margin-left: 29px; }

  .taskbar { position: absolute; left: 0; top: 739px; width: 1366px; height: 29px; background: linear-gradient(90deg, #242323, #2d2e2e 40%, #292b2b 75%, #171718); border-top: 1px solid #777; display: flex; justify-content: space-between; }
  .tasks { display: grid; grid-template-columns: repeat(24, 34.850px); }
  .tasks span { display: grid; place-items: center; padding-bottom: 1px; position: relative; }
  .tasks .alert { background: #a9622c; box-shadow: inset 0 -2px #ff7b18; }
  .tasks .focus { background: #525252; }
  .run::after { content: ""; position: absolute; left: 3px; right: 3px; bottom: 0; height: 2px; background: #df9158; }
  .focus.run::after { left: 0; right: 0; }
  .time { color: #fff; font: 8.300px/12px "Open Sans", sans-serif; display: flex; flex-direction: column; align-items: flex-end; padding: 2px 4px 0 0; }
  .time span:first-child { margin-right: 4px; }
</style>
